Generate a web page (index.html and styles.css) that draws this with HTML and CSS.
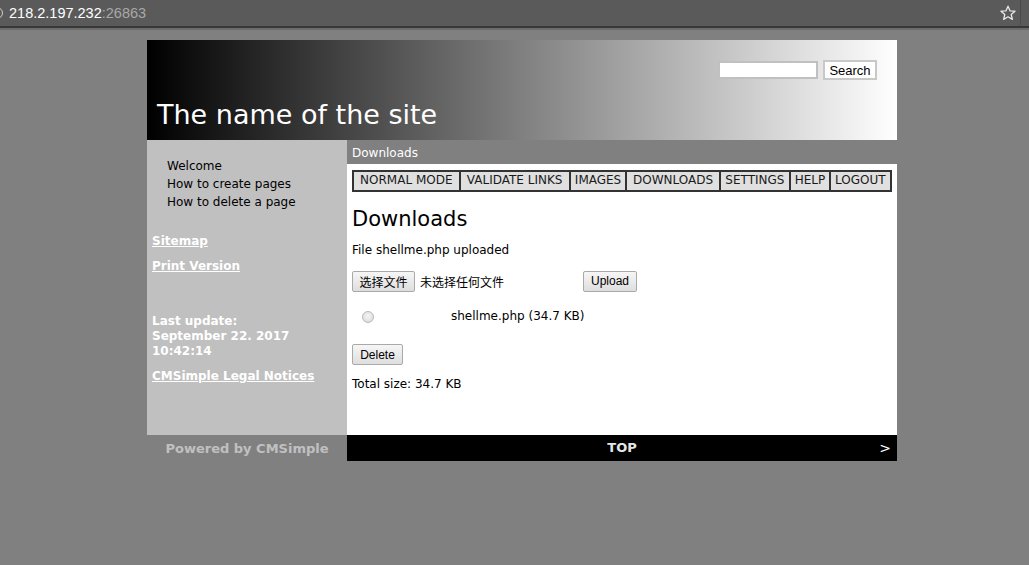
FILE: index.html
```html
<!DOCTYPE html>
<html>
<head>
<meta charset="utf-8">
<link rel="stylesheet" href="styles.css">
</head>
<body>
<div class="chrome">
  <div class="addr">
    <span class="info"></span>
    <span class="host">218.2.197.232</span><span class="port">:26863</span>
    <svg class="star" width="16" height="16" viewBox="0 0 16 16"><path d="M8 1.2l2 4.6 5 .4-3.8 3.3 1.2 4.9L8 11.8l-4.4 2.6 1.2-4.9L1 6.2l5-.4z" fill="none" stroke="#e8e8e8" stroke-width="1.3" stroke-linejoin="round"/></svg>
  </div>
</div>
<div class="page">
  <div class="header">
    <form class="search">
      <input type="text" class="search-input">
      <button type="button" class="search-btn">Search</button>
    </form>
    <h1 class="site-name">The name of the site</h1>
  </div>
  <div class="body-row">
    <div class="sidebar">
      <ul class="menu">
        <li>Welcome</li>
        <li>How to create pages</li>
        <li>How to delete a page</li>
      </ul>
      <a class="side-link first">Sitemap</a>
      <a class="side-link">Print Version</a>
      <div class="last-update">Last update:<br>September 22. 2017<br>10:42:14</div>
      <a class="side-link legal">CMSimple Legal Notices</a>
    </div>
    <div class="main">
      <div class="crumb">Downloads</div>
      <div class="content">
        <table class="admin">
          <tr>
            <td>NORMAL MODE</td>
            <td>VALIDATE LINKS</td>
            <td>IMAGES</td>
            <td>DOWNLOADS</td>
            <td>SETTINGS</td>
            <td>HELP</td>
            <td>LOGOUT</td>
          </tr>
        </table>
        <h2 class="title">Downloads</h2>
        <p class="msg">File shellme.php uploaded</p>
        <div class="upload-row">
          <span class="file-btn btn">选择文件</span>
          <span class="file-none">未选择任何文件</span>
          <span class="btn upload">Upload</span>
        </div>
        <div class="file-row">
          <span class="radio"></span>
          <span class="fname">shellme.php (34.7 KB)</span>
        </div>
        <div class="del-row"><span class="btn">Delete</span></div>
        <p class="total">Total size: 34.7 KB</p>
      </div>
    </div>
  </div>
  <div class="footer">
    <div class="powered">Powered by CMSimple</div>
    <div class="top-bar"><span class="top">TOP</span><span class="arrow">&gt;</span></div>
  </div>
</div>
</body>
</html>
```

FILE: styles.css
```css
html, body {
  margin: 0;
  padding: 0;
  background: #808080;
}
body {
  font-family: "DejaVu Sans", Verdana, sans-serif;
  font-size: 12px;
  color: #000;
}
.chrome {
  height: 26px;
  background: #5a5a5a;
  border-bottom: 2px solid #383838;
  box-shadow: 0 2px 0 #6c6c6c;
}
.addr {
  display: flex;
  align-items: center;
  height: 26px;
  position: relative;
  margin-right: 8px;
  border-right: 1px solid #4a4a4a;
  border-bottom-right-radius: 3px;
}
.info {
  width: 12px;
  height: 12px;
  border: 1px solid #cfcfcf;
  border-radius: 50%;
  margin-left: -9px;
  box-sizing: border-box;
}
.host {
  font-family: "Liberation Sans", Arial, sans-serif;
  font-size: 14.5px;
  color: #fff;
  margin-left: 6px;
}
.port {
  font-family: "Liberation Sans", Arial, sans-serif;
  font-size: 14.5px;
  color: #a8a8a8;
}
.star {
  margin-left: auto;
  margin-right: 4px;
}
.page {
  width: 750px;
  margin: 12px 0 0 147px;
}
.header {
  height: 100px;
  background: linear-gradient(to right, #000 0%, #808080 50%, #fff 100%);
  display: flex;
  flex-direction: column;
  position: relative;
}
.search {
  display: flex;
  justify-content: flex-end;
  align-items: center;
  gap: 5px;
  margin: 20px 20px 0 0;
  height: 20px;
}
.search-input {
  width: 100px;
  height: 18px;
  box-sizing: border-box;
  border: 2px solid #c0c0c0;
  background: #fff;
  margin: 0;
  padding: 0;
}
.search-btn {
  font-family: "Liberation Sans", Arial, sans-serif;
  font-size: 13px;
  width: 54px;
  height: 20px;
  box-sizing: border-box;
  border: 2px solid #c8c8c8;
  background: #fff;
  color: #000;
  padding: 0;
  margin: 0;
}
.site-name {
  margin: 19px 0 0 10px;
  font-weight: normal;
  font-size: 27px;
  line-height: 32px;
  color: #fff;
}
.body-row {
  display: flex;
  height: 295px;
}
.sidebar {
  width: 200px;
  background: #c0c0c0;
  padding: 17px 0 0 5px;
  box-sizing: border-box;
  display: flex;
  flex-direction: column;
  align-items: flex-start;
}
.menu {
  list-style: none;
  margin: 0 0 0 15px;
  padding: 0;
  line-height: 18px;
}
.side-link {
  color: #fff;
  font-weight: bold;
  text-decoration: underline;
  line-height: 16px;
  margin-top: 9px;
}
.side-link.first {
  margin-top: 22px;
}
.last-update {
  color: #fff;
  font-weight: bold;
  line-height: 15px;
  margin-top: 40px;
}
.side-link.legal {
  margin-top: 9px;
}
.main {
  width: 550px;
  display: flex;
  flex-direction: column;
  background: #fff;
}
.crumb {
  background: #808080;
  color: #fff;
  height: 24px;
  line-height: 26px;
  padding-left: 5px;
}
.content {
  padding: 6px 5px 0 5px;
}
.admin {
  width: 540px;
  border-collapse: collapse;
  border: 2px solid #333;
}
.admin td {
  background: #e0e0e0;
  border: 1px solid #333;
  border-left-width: 2px;
  padding: 1px 2px 2px 2px;
  line-height: 15px;
  white-space: nowrap;
  text-align: center;
  color: #1a1a1a;
}
.title {
  font-weight: normal;
  font-size: 21px;
  line-height: 26px;
  margin: 14px 0 0 0;
}
.msg {
  margin: 10px 0 0 0;
  line-height: 16px;
}
.upload-row {
  display: flex;
  align-items: center;
  margin-top: 12px;
  height: 22px;
}
.btn {
  font-family: "Liberation Sans", Arial, sans-serif;
  font-size: 12px;
  display: inline-flex;
  align-items: center;
  justify-content: center;
  height: 21px;
  box-sizing: border-box;
  padding: 0 6px;
  border: 1px solid #a9a9a9;
  border-radius: 2px;
  background: linear-gradient(#f6f6f6, #dedede);
  color: #000;
}
.file-btn {
  font-family: "Noto Sans CJK SC", sans-serif;
  width: 63px;
  padding: 0;
}
.file-none {
  font-family: "Noto Sans CJK SC", sans-serif;
  font-size: 12px;
  margin-left: 5px;
}
.upload {
  margin-left: 79px;
  width: 54px;
}
.file-row {
  display: flex;
  align-items: center;
  height: 22px;
  margin-top: 13px;
}
.radio {
  width: 12px;
  height: 12px;
  box-sizing: border-box;
  border: 1px solid #b8b8b8;
  border-radius: 50%;
  background: radial-gradient(circle at 50% 40%, #f4f4f4, #d8d8d8);
  margin-left: 10px;
  margin-top: 2px;
}
.fname {
  margin-left: 77px;
}
.del-row {
  margin-top: 17px;
  display: flex;
}
.del-row .btn {
  width: 51px;
  padding: 0;
}
.total {
  margin: 11px 0 0 0;
  line-height: 16px;
}
.footer {
  display: flex;
  height: 26px;
  font-weight: bold;
  font-size: 13px;
}
.powered {
  width: 200px;
  text-align: center;
  line-height: 28px;
  color: #c0c0c0;
  background: #808080;
}
.top-bar {
  width: 550px;
  background: #000;
  display: flex;
  align-items: center;
  position: relative;
  line-height: 28px;
}
.top {
  flex: 1;
  text-align: center;
  color: #e6e6e6;
}
.arrow {
  position: absolute;
  right: 6px;
  color: #fff;
  font-weight: normal;
  font-size: 14px;
}
```
